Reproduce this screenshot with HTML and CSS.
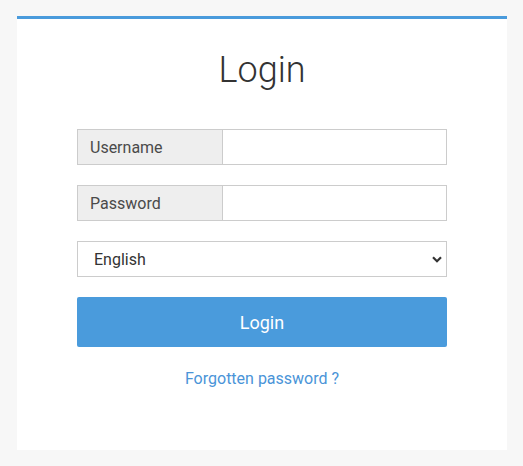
FILE: index.html
```html
<!DOCTYPE html>
<html>
<head>
<meta charset="utf-8">
<link rel="stylesheet" href="styles.css">
</head>
<body>
<div class="card">
  <h1 class="title">Login</h1>
  <form class="form">
    <div class="group">
      <span class="addon">Username</span>
      <input class="field" type="text">
    </div>
    <div class="group">
      <span class="addon">Password</span>
      <input class="field" type="password">
    </div>
    <div class="select-wrap">
      <select class="select">
        <option>English</option>
      </select>
      <svg class="chevron" width="10" height="7" viewBox="0 0 10 7"><path d="M1 1.2 L5 5.2 L9 1.2" fill="none" stroke="#333" stroke-width="2.2"/></svg>
    </div>
    <button class="btn" type="button">Login</button>
    <a class="link" href="#">Forgotten password ?</a>
  </form>
</div>
</body>
</html>
```
FILE: styles.css
```css
html, body {
  margin: 0;
  padding: 0;
  background: #f7f7f7;
  font-family: Roboto, "Liberation Sans", sans-serif;
}
body {
  padding: 16px 16px 16px 17px;
}
.card {
  width: 490px;
  height: 434px;
  box-sizing: border-box;
  background: #fff;
  border-top: 3px solid #4a9bdc;
}
.title {
  margin: 0;
  padding-top: 29px;
  height: 80px;
  box-sizing: border-box;
  text-align: center;
  font-family: "Roboto Light", Roboto, sans-serif;
  font-weight: 300;
  font-size: 36px;
  line-height: 44px;
  color: #333;
}
.form {
  width: 370px;
  margin: 30px auto 0;
  display: flex;
  flex-direction: column;
}
.group {
  display: flex;
  height: 36px;
  margin-bottom: 20px;
}
.addon {
  flex: 0 0 146px;
  box-sizing: border-box;
  background: #eeeeee;
  border: 1px solid #cccccc;
  padding: 0 12px;
  font-size: 16px;
  color: #4a4a4a;
  display: flex;
  align-items: center;
}
.field {
  flex: 1 1 auto;
  min-width: 0;
  width: 0;
  border: 1px solid #cccccc;
  border-left: none;
  margin: 0;
  padding: 0 10px;
  font-size: 16px;
  outline: none;
}
.select-wrap {
  position: relative;
  height: 36px;
  margin-bottom: 20px;
}
.select {
  appearance: none;
  -webkit-appearance: none;
  width: 100%;
  height: 36px;
  border: 1px solid #cccccc;
  border-radius: 0;
  background: #fff;
  padding: 0 16px;
  font-family: Roboto, "Liberation Sans", sans-serif;
  font-size: 16px;
  color: #333;
  outline: none;
}
.chevron {
  position: absolute;
  right: 5px;
  top: 15px;
  pointer-events: none;
}
.btn {
  height: 50px;
  border: none;
  border-radius: 2px;
  background: #4a9bdc;
  color: #fff;
  font-family: Roboto, "Liberation Sans", sans-serif;
  font-size: 18px;
  cursor: pointer;
}
.link {
  margin-top: 22px;
  text-align: center;
  font-size: 16px;
  color: #4a94d8;
  text-decoration: none;
}
```
